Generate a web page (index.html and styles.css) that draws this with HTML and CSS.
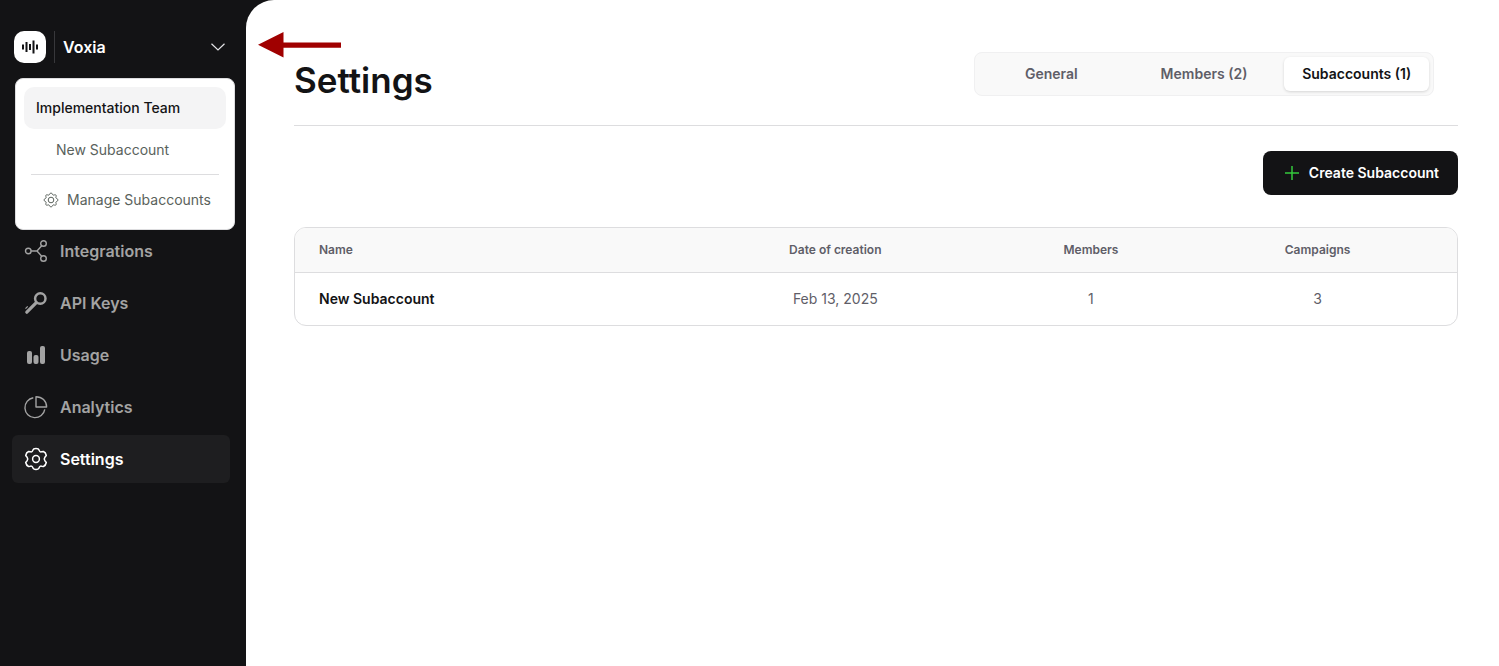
FILE: index.html
```html
<!DOCTYPE html>
<html lang="en">
<head>
    <meta charset="UTF-8">
    <meta name="viewport" content="width=device-width, initial-scale=1.0">
    <title>Voxia - Settings</title>
    <link rel="stylesheet" href="styles.css">
</head>
<body>

<div class="app">
    <aside class="sidebar">
        <div class="account">
            <button class="account-toggle" type="button">
                <span class="logo">
                    <svg width="32" height="32" viewBox="0 0 32 32" fill="none" stroke="#131315" stroke-width="2">
                        <path d="M9 13.5v5M12.5 11v10M16 13v6M19.5 9.5v13M23 13.5v5"/>
                    </svg>
                </span>
                <span class="account-name">Voxia</span>
                <svg class="chevron" width="14" height="8" viewBox="0 0 14 8" fill="none" stroke="#e4e4e7" stroke-width="1.2">
                    <path d="M0.5 0.7L7 7L13.5 0.7"/>
                </svg>
            </button>

            <div class="account-menu">
                <a class="menu-item current" href="#">Implementation Team</a>
                <a class="menu-item sub" href="#">New Subaccount</a>
                <hr class="menu-line">
                <a class="menu-item manage" href="#">
                    <svg width="16" height="16" viewBox="0 0 16 16" fill="none" stroke="currentColor">
                        <circle cx="8" cy="8" r="2.8"/>
                        <path d="M8 1C9.3 1 9.3 2.9 10.3 3.1C11.3 3.4 12 2.1 12.9 3.1C13.9 4 12.6 4.7 12.9 5.7C13.1 6.7 15 6.7 15 8C15 9.3 13.1 9.3 12.9 10.3C12.6 11.3 13.9 12 12.9 12.9C12 13.9 11.3 12.6 10.3 12.9C9.3 13.1 9.3 15 8 15C6.7 15 6.7 13.1 5.7 12.9C4.7 12.6 4 13.9 3.1 12.9C2.1 12 3.4 11.3 3.1 10.3C2.9 9.3 1 9.3 1 8C1 6.7 2.9 6.7 3.1 5.7C3.4 4.7 2.1 4 3.1 3.1C4 2.1 4.7 3.4 5.7 3.1C6.7 2.9 6.7 1 8 1Z"/>
                    </svg>
                    Manage Subaccounts
                </a>
            </div>
        </div>

        <nav class="nav">
            <a class="nav-item" href="#">
                <svg width="24" height="24" viewBox="0 0 24 24" fill="none" stroke="currentColor" stroke-width="1.4">
                    <circle cx="4.3" cy="12" r="2.8"/>
                    <circle cx="19.5" cy="4.5" r="2.8"/>
                    <circle cx="19.5" cy="19.5" r="2.8"/>
                    <path d="M7.1 12h5.9M17.7 6.8L13 12l4.7 5.2"/>
                </svg>
                Integrations
            </a>
            <a class="nav-item" href="#">
                <svg width="24" height="24" viewBox="0 0 24 24" fill="none" stroke="currentColor">
                    <circle cx="16.3" cy="7.5" r="5.2" stroke-width="2.5"/>
                    <path d="M12.3 11.7L2.8 21.2" stroke-width="3.2" stroke-linecap="round"/>
                    <path d="M1.5 17.6L3.7 15.4" stroke-width="1.2"/>
                </svg>
                API Keys
            </a>
            <a class="nav-item" href="#">
                <svg width="24" height="24" viewBox="0 0 24 24" fill="currentColor">
                    <rect x="3" y="8" width="5" height="13" rx="2"/>
                    <rect x="9.5" y="12" width="5" height="9" rx="2"/>
                    <rect x="16" y="3" width="5" height="18" rx="2"/>
                </svg>
                Usage
            </a>
            <a class="nav-item" href="#">
                <svg width="24" height="24" viewBox="0 0 24 24" fill="none" stroke="currentColor" stroke-width="1.4" stroke-linejoin="round">
                    <path d="M9.3 2.8A10 10 0 1 0 20.8 14.3"/>
                    <path d="M12 1.7V12H22.6C22.6 6 18 1.7 12 1.7Z"/>
                </svg>
                Analytics
            </a>
            <a class="nav-item active" href="#">
                <svg width="24" height="24" viewBox="0 0 24 24" fill="none" stroke="currentColor" stroke-width="1.5" stroke-linejoin="round">
                    <circle cx="12" cy="12" r="3.4"/>
                    <path d="M12 1.5C14 1.5 14.9 2.3 15.2 3.4C15.5 4.5 16.5 5.1 17.6 4.8L19.4 4.5C20.8 5 22 6.9 22.3 8.5L20.9 10.2C20.1 11.3 20.1 12.7 20.9 13.8L22.3 15.5C22 17.1 20.8 19 19.4 19.5L17.6 19.2C16.5 18.9 15.5 19.5 15.2 20.6C14.9 21.7 14 22.5 12 22.5C10 22.5 9.1 21.7 8.8 20.6C8.5 19.5 7.5 18.9 6.4 19.2L4.6 19.5C3.2 19 2 17.1 1.7 15.5L3.1 13.8C3.9 12.7 3.9 11.3 3.1 10.2L1.7 8.5C2 6.9 3.2 5 4.6 4.5L6.4 4.8C7.5 5.1 8.5 4.5 8.8 3.4C9.1 2.3 10 1.5 12 1.5Z"/>
                </svg>
                Settings
            </a>
        </nav>
    </aside>

    <main class="content">
        <svg class="arrow" width="84" height="26" viewBox="0 0 84 26" fill="#a00000">
            <path d="M0 12.7L25.5 0V10.5H83V15.7H25.5V25.4Z"/>
        </svg>

        <header class="page-header">
            <h1>Settings</h1>
            <div class="tabs">
                <button class="tab" type="button">General</button>
                <button class="tab" type="button">Members (2)</button>
                <button class="tab active" type="button">Subaccounts (1)</button>
            </div>
        </header>

        <div class="actions">
            <button class="create-button" type="button">
                <svg width="14" height="14" viewBox="0 0 14 14" fill="none" stroke="#35c93c" stroke-width="1.5">
                    <path d="M7 0v14M0 7h14"/>
                </svg>
                Create Subaccount
            </button>
        </div>

        <div class="table-card">
            <table class="subaccounts">
                <thead>
                    <tr>
                        <th class="col-name">Name</th>
                        <th class="col-date">Date of creation</th>
                        <th class="col-members">Members</th>
                        <th>Campaigns</th>
                    </tr>
                </thead>
                <tbody>
                    <tr>
                        <td class="col-name">New Subaccount</td>
                        <td>Feb 13, 2025</td>
                        <td>1</td>
                        <td>3</td>
                    </tr>
                </tbody>
            </table>
        </div>
    </main>
</div>

</body>
</html>
```

FILE: styles.css
```css
:root {
    --dark: #131315;
    --line: #dddddf;
    --muted: #5f5e68;
    --navColor: #a3a3a3;
}

* {
    box-sizing: border-box;
}

body {
    margin: 0;
    font-family: Inter, "Liberation Sans", sans-serif;
    font-size: 14px;
    line-height: 20px;
    color: var(--dark);
    background: var(--dark);
}

button {
    font: inherit;
    border: none;
    cursor: pointer;
}

a {
    color: inherit;
    text-decoration: none;
}

svg {
    display: block;
    flex-shrink: 0;
}

.app {
    display: grid;
    grid-template-columns: 246px 1fr;
    min-height: 100vh;
}

/* Sidebar */
.sidebar {
    padding: 31px 16px 24px 12px;
}

.account {
    position: relative;
}

.account-toggle {
    display: flex;
    align-items: center;
    width: 100%;
    padding: 0 5px 0 2px;
    background: none;
    color: white;
}

.logo {
    border-radius: 10px;
    background: white;
}

.account-name {
    flex: 1;
    margin-left: 8px;
    padding-left: 8px;
    border-left: 1px solid #38383b;
    font-size: 16px;
    font-weight: 600;
    line-height: 32px;
    text-align: left;
}

/* Account dropdown */
.account-menu {
    position: absolute;
    top: 47px;
    left: 3px;
    z-index: 5;
    width: 220px;
    padding: 8px;
    border: 1px solid var(--line);
    border-radius: 8px;
    background: white;
}

.menu-item {
    display: flex;
    align-items: center;
    height: 42px;
    padding: 0 12px;
    border-radius: 10px;
    color: #5a625c;
}

.menu-item.current {
    background: #f4f4f5;
    color: var(--dark);
    font-weight: 500;
}

.menu-item.sub {
    padding-left: 32px;
}

.menu-item.manage {
    gap: 8px;
    padding-left: 19px;
}

.menu-line {
    margin: 3px 7px 4px;
    border: none;
    border-top: 1px solid var(--line);
}

.nav {
    display: flex;
    flex-direction: column;
    gap: 4px;
    margin-top: 164px;
}

.nav-item {
    display: flex;
    align-items: center;
    gap: 12px;
    height: 48px;
    padding: 0 12px;
    border-radius: 6px;
    color: var(--navColor);
    font-size: 16px;
    font-weight: 600;
}

.nav-item.active {
    background: #1e1e20;
    color: white;
}

/* Main content */
.content {
    position: relative;
    padding: 0 41px 48px 48px;
    border-top-left-radius: 28px;
    background: white;
}

.arrow {
    position: absolute;
    top: 32px;
    left: 12px;
}

.page-header {
    display: flex;
    align-items: flex-end;
    justify-content: space-between;
    padding: 52px 24px 21px 0;
    border-bottom: 1px solid var(--line);
}

h1 {
    margin: 0;
    padding-top: 4px;
    font-size: 35px;
    font-weight: 600;
    line-height: 48px;
}

.tabs {
    display: grid;
    grid-template-columns: repeat(3, 1fr);
    align-self: flex-start;
    width: 460px;
    border: 1px solid #f0f0f1;
    border-radius: 8px;
    background: #f9f9f9;
}

.tab {
    height: 34px;
    margin: 4px;
    padding: 0;
    border-radius: 6px;
    background: none;
    color: var(--muted);
    font-weight: 600;
}

.tab.active {
    background: white;
    box-shadow: 0 1px 3px rgba(0, 0, 0, 0.15);
    color: var(--dark);
}

.actions {
    display: flex;
    justify-content: flex-end;
    padding: 25px 0 32px;
}

.create-button {
    display: flex;
    align-items: center;
    gap: 10px;
    height: 44px;
    padding: 0 19px 0 22px;
    border-radius: 8px;
    background: var(--dark);
    color: white;
    font-weight: 600;
}

/* Table */
.table-card {
    overflow: hidden;
    border: 1px solid var(--line);
    border-radius: 12px;
}

.subaccounts {
    width: 100%;
    table-layout: fixed;
    border-spacing: 0;
    color: var(--muted);
    text-align: center;
}

.subaccounts th {
    height: 45px;
    padding: 0;
    border-bottom: 1px solid var(--line);
    background: #f9f9f9;
    font-size: 12px;
    font-weight: 600;
}

.subaccounts td {
    height: 52px;
    padding: 0;
}

.subaccounts .col-name {
    width: 32%;
    padding-left: 24px;
    text-align: left;
}

.subaccounts td.col-name {
    color: var(--dark);
    font-weight: 600;
}

.col-date {
    width: 29%;
}

.col-members {
    width: 15%;
}
```
